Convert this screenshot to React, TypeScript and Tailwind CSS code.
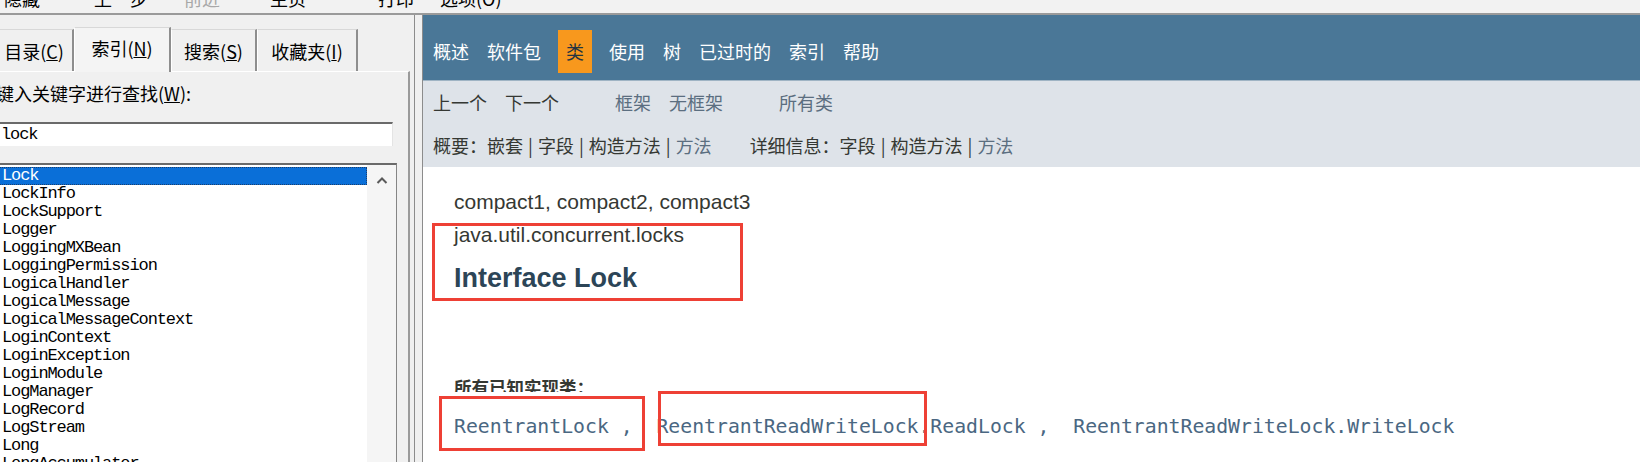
import React from "react";

const cjk = "font-['Noto_Sans_CJK_SC',sans-serif]";

const listItems = [
  "Lock",
  "LockInfo",
  "LockSupport",
  "Logger",
  "LoggingMXBean",
  "LoggingPermission",
  "LogicalHandler",
  "LogicalMessage",
  "LogicalMessageContext",
  "LoginContext",
  "LoginException",
  "LoginModule",
  "LogManager",
  "LogRecord",
  "LogStream",
  "Long",
  "LongAccumulator",
];

const MenuStrip: React.FC = () => (
  <div className="h-[15px] shrink-0 overflow-hidden border-b-2 border-b-[#9a9a9a] bg-[#f2f2f2]">
    <div className={`flex mt-[-11px] text-[18px] leading-[18px] text-black ${cjk}`}>
      <span className="ml-[4px]">隐藏</span>
      <span className="ml-[54px]">上一步</span>
      <span className="ml-[36px] text-[#a8a8a8]">前进</span>
      <span className="ml-[50px]">主页</span>
      <span className="ml-[72px]">打印</span>
      <span className="ml-[26px]">选项(O)</span>
    </div>
  </div>
);

const Tab: React.FC<{ label: string; hot: string; width: string; selected?: boolean }> = ({
  label,
  hot,
  width,
  selected,
}) => (
  <div
    className={`${width} flex justify-center border-t border-l border-t-[#d8d8d8] border-l-white border-r-2 border-r-[#8e8e8e] ${
      selected ? "h-[45px] bg-[#f4f4f4] pt-[8px]" : "h-[42px] mt-[2px] bg-[#f0f0f0] pt-[9px]"
    }`}
  >
    <span className="text-[18px] leading-[24px] text-black">
      {label}(<span className="underline">{hot}</span>)
    </span>
  </div>
);

const LeftPane: React.FC = () => (
  <div className={`w-[414px] shrink-0 flex flex-col bg-[#f0f0f0] ${cjk}`}>
    <div className="relative z-10 flex items-start h-[44px] mt-[12px] ml-[-5px]">
      <Tab label="目录" hot="C" width="w-[79px]" />
      <Tab label="索引" hot="N" width="w-[97px]" selected />
      <Tab label="搜索" hot="S" width="w-[86px]" />
      <Tab label="收藏夹" hot="I" width="w-[101px]" />
    </div>
    <div className="flex-1 min-h-0 w-[410px] border-t border-t-white border-r-2 border-r-[#9a9a9a] overflow-hidden">
      <div className="ml-[-4px]">
        <div className="mt-[10px] text-[18px] leading-[22px] text-black whitespace-nowrap">
          键入关键字进行查找(<span className="underline">W</span>):
        </div>
        <div className="mt-[18px] h-[24px] w-[397px] bg-white border-t-2 border-t-[#6a6a6a] border-r border-r-[#e4e4e4] pl-[5px] font-['Liberation_Mono',monospace] text-[17px] tracking-[-1.1px] leading-[22px] text-black">
          lock
        </div>
        <div className="mt-[17px] w-[401px] h-[320px] flex bg-white border-t-2 border-t-[#6a6a6a] border-r border-r-[#858585]">
          <div className="flex-1 pt-[2px] font-['Liberation_Mono',monospace] text-[17px] tracking-[-1.1px] leading-[18px] text-black">
            {listItems.map((item, i) => (
              <div
                key={item}
                className={`h-[18px] pl-[6px] whitespace-nowrap ${
                  i === 0 ? "bg-[#0a6fd8] text-white outline-1 outline-dotted outline-[#1b3f6e] -outline-offset-1" : ""
                }`}
              >
                {item}
              </div>
            ))}
          </div>
          <div className="w-[29px] bg-[#f5f5f5] flex justify-center pt-[11px]">
            <svg width="12" height="8" viewBox="0 0 12 8">
              <polyline points="1.5,7 6,2.5 10.5,7" fill="none" stroke="#5a5a5a" strokeWidth="2" />
            </svg>
          </div>
        </div>
      </div>
    </div>
  </div>
);

const navItems = ["概述", "软件包", "类", "使用", "树", "已过时的", "索引", "帮助"];

const Sep: React.FC = () => <span className="px-[5px]">|</span>;

const Content: React.FC = () => (
  <div className="relative flex-1 flex flex-col bg-white">
    <div className={`h-[66px] shrink-0 bg-[#4a7797] border-b border-b-[#9fb4c4] pt-[15px] pl-[1px] ${cjk}`}>
      <div className="flex h-[43px] items-center text-[18px] text-white">
        {navItems.map((item) =>
          item === "类" ? (
            <span key={item} className="mx-[8px] px-[8px] h-[43px] flex items-center bg-[#f8981d] text-[#253441]">
              {item}
            </span>
          ) : (
            <span key={item} className="px-[9px]">
              {item}
            </span>
          )
        )}
      </div>
    </div>
    <div className={`h-[86px] shrink-0 bg-[#dee3e9] pl-[10px] text-[18px] leading-[22px] ${cjk}`}>
      <div className="mt-[10px] flex text-[#353833]">
        <span>上一个</span>
        <span className="ml-[18px]">下一个</span>
        <span className="ml-[56px] text-[#5b6e80]">框架</span>
        <span className="ml-[18px] text-[#5b6e80]">无框架</span>
        <span className="ml-[56px] text-[#5b6e80]">所有类</span>
      </div>
      <div className="mt-[21px] flex text-[#353833]">
        <span>概要：嵌套</span>
        <Sep />
        <span>字段</span>
        <Sep />
        <span>构造方法</span>
        <Sep />
        <span className="text-[#5b6e80]">方法</span>
        <span className="ml-[38px]">详细信息：字段</span>
        <Sep />
        <span>构造方法</span>
        <Sep />
        <span className="text-[#5b6e80]">方法</span>
      </div>
    </div>
    <div className="flex-1 pl-[31px] font-['Liberation_Sans','Noto_Sans_CJK_SC',sans-serif] text-[#353833]">
      <div className="pt-[23px] text-[21px] leading-[24px]">compact1, compact2, compact3</div>
      <div className="mt-[9px] text-[21px] leading-[24px]">java.util.concurrent.locks</div>
      <div className="mt-[15px] text-[27px] leading-[32px] font-bold text-[#2c4557]">Interface Lock</div>
      <div className="mt-[83px] h-[15px] overflow-hidden text-[17.5px] leading-[22px] font-bold">所有已知实现类：</div>
      <div className="mt-[23px] font-['DejaVu_Sans_Mono',monospace] text-[19.8px] leading-[24px] text-[#4a6782] whitespace-pre">
        ReentrantLock ,  ReentrantReadWriteLock.ReadLock ,  ReentrantReadWriteLock.WriteLock
      </div>
    </div>
    <div className="absolute left-[9px] top-[208px] w-[311px] h-[78px] border-[3px] border-[#ee4035]" />
    <div className="absolute left-[16px] top-[381px] w-[206px] h-[55px] border-[3px] border-[#ee4035]" />
    <div className="absolute left-[235px] top-[376px] w-[269px] h-[55px] border-[3px] border-[#ee4035]" />
  </div>
);

const App: React.FC = () => {
  return (
    <div className="w-[1640px] h-[462px] overflow-hidden flex flex-col bg-[#f0f0f0]">
      <MenuStrip />
      <div className="flex flex-1 min-h-0">
        <LeftPane />
        <div className="w-[9px] shrink-0 border-x border-x-[#8c8c8c] bg-[#f0f0f0]" />
        <Content />
      </div>
    </div>
  );
};

export default App;
